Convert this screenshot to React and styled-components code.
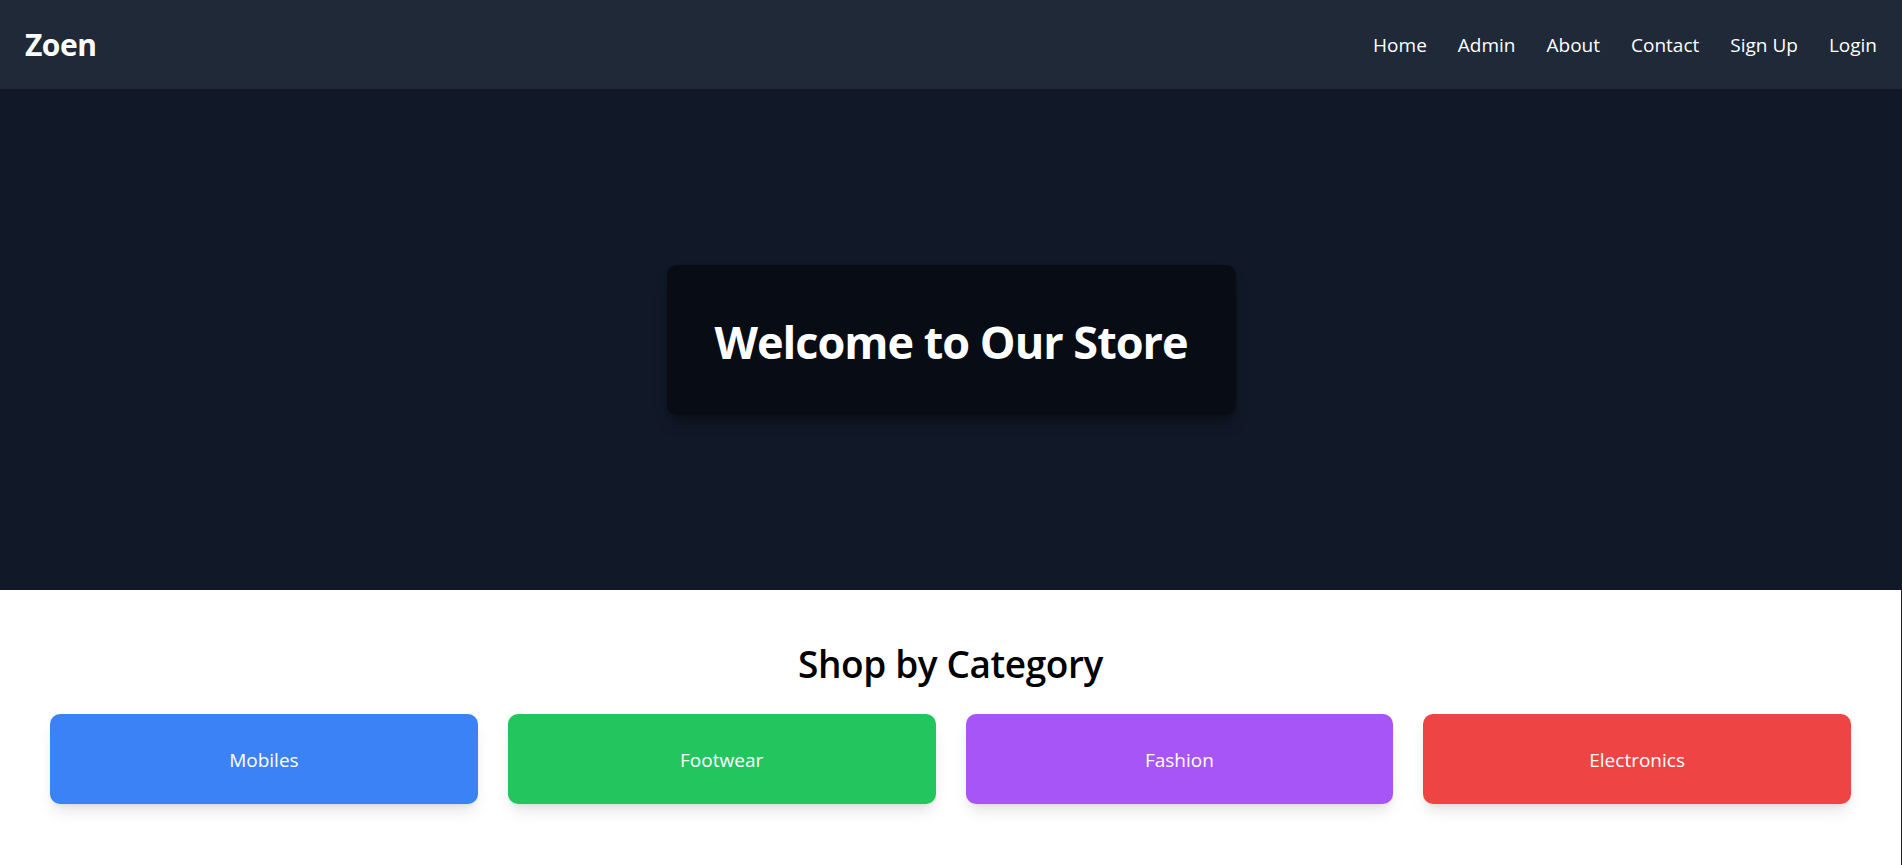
import React from 'react';
import styled, { createGlobalStyle } from 'styled-components';

const GlobalStyle = createGlobalStyle`
    * {
        box-sizing: border-box;
    }
    body {
        margin: 0;
        background: #222;
        font-family: "Open Sans", "Noto Sans", sans-serif;
    }
`;

const categories = [
    { name: 'Mobiles', color: '#3b82f6' },
    { name: 'Footwear', color: '#22c55e' },
    { name: 'Fashion', color: '#a855f7' },
    { name: 'Electronics', color: '#ef4444' },
];

const links = ['Home', 'Admin', 'About', 'Contact', 'Sign Up', 'Login'];

function App() {
    return (
        <>
            <GlobalStyle />
            <Navbar>
                <Logo>Zoen</Logo>
                <NavLinks>
                    {links.map((link) => (
                        <NavLink key={link} href="#">
                            {link}
                        </NavLink>
                    ))}
                </NavLinks>
            </Navbar>
            <Hero>
                <WelcomeBox>
                    <h1>Welcome to Our Store</h1>
                </WelcomeBox>
            </Hero>
            <CategorySection>
                <h2>Shop by Category</h2>
                <CategoryGrid>
                    {categories.map((cat) => (
                        <CategoryCard key={cat.name} $bg={cat.color}>
                            {cat.name}
                        </CategoryCard>
                    ))}
                </CategoryGrid>
            </CategorySection>
        </>
    );
}

const Navbar = styled.nav`
    height: 89px;
    background: #1f2937;
    display: flex;
    align-items: center;
    justify-content: space-between;
    padding: 0 25px;
    color: white;
`;

const Logo = styled.div`
    font-size: 30px;
    font-weight: 700;
    letter-spacing: -0.5px;
`;

const NavLinks = styled.div`
    display: flex;
    gap: 31px;
`;

const NavLink = styled.a`
    color: white;
    text-decoration: none;
    font-size: 19px;
`;

const Hero = styled.section`
    height: 501px;
    background: #111827;
    display: flex;
    align-items: center;
    justify-content: center;
    h1 {
        margin: 0;
        color: white;
        font-size: 45px;
        font-weight: 700;
        line-height: 54px;
        letter-spacing: -1px;
        transform: translateY(2px);
    }
`;

const WelcomeBox = styled.div`
    width: 569px;
    height: 150px;
    display: flex;
    align-items: center;
    justify-content: center;
    background: #080c14;
    border-radius: 10px;
    box-shadow: 0 10px 15px -3px rgba(0, 0, 0, 0.3), 0 4px 6px -4px rgba(0, 0, 0, 0.3);
`;

const CategorySection = styled.section`
    background: white;
    margin-right: 1px;
    padding: 43px 50px 61px;
    h2 {
        margin: 0 0 20px;
        text-align: center;
        font-size: 37px;
        font-weight: 600;
        line-height: 61px;
        color: #000;
        letter-spacing: -0.4px;
    }
`;

const CategoryGrid = styled.div`
    display: grid;
    grid-template-columns: repeat(4, 1fr);
    gap: 30px;
`;

const CategoryCard = styled.div`
    height: 90px;
    display: flex;
    align-items: center;
    justify-content: center;
    background: ${(p) => p.$bg};
    color: white;
    font-size: 19px;
    padding-top: 2px;
    border-radius: 10px;
    box-shadow: 0 10px 15px -3px rgba(0, 0, 0, 0.1), 0 4px 6px -4px rgba(0, 0, 0, 0.1);
`;

export default App;
